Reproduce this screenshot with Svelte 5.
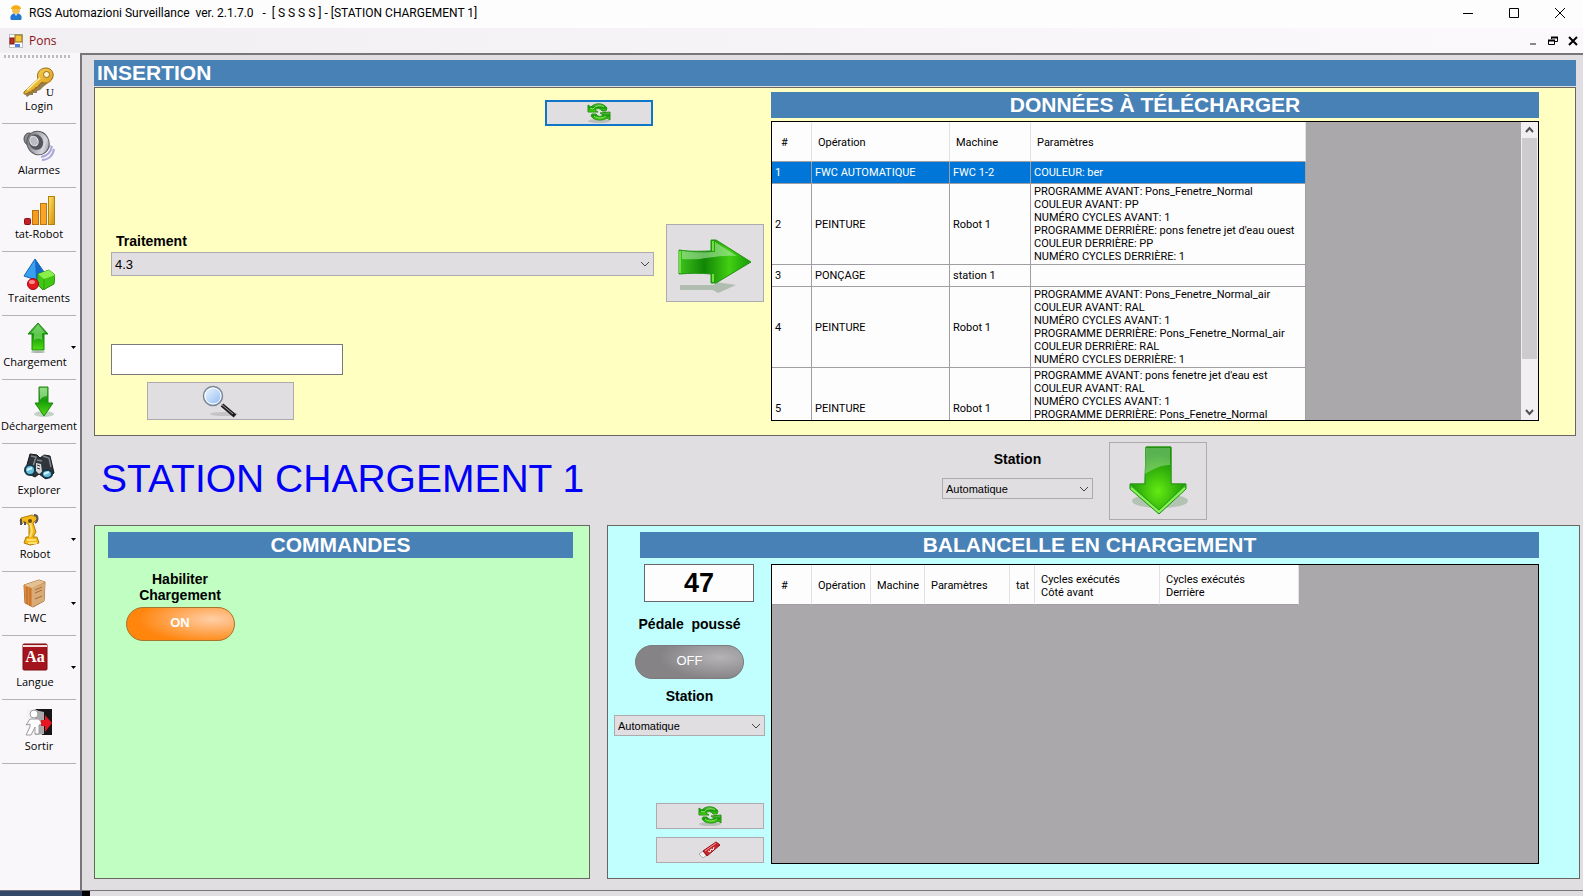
<script lang="ts">
  interface Tool {
    id: string;
    label: string;
    menu?: boolean;
  }

  interface Step {
    id: number;
    operation: string;
    machine: string;
    params: string[];
  }

  const tools: Tool[] = [
    { id: 'login', label: 'Login' },
    { id: 'alarms', label: 'Alarmes' },
    { id: 'stat', label: 'tat-Robot' },
    { id: 'shapes', label: 'Traitements' },
    { id: 'load', label: 'Chargement', menu: true },
    { id: 'unload', label: 'Déchargement' },
    { id: 'explore', label: 'Explorer' },
    { id: 'robot', label: 'Robot', menu: true },
    { id: 'fwc', label: 'FWC', menu: true },
    { id: 'lang', label: 'Langue', menu: true },
    { id: 'exit', label: 'Sortir' }
  ];

  const steps: Step[] = [
    { id: 1, operation: 'FWC AUTOMATIQUE', machine: 'FWC 1-2', params: ['COULEUR: ber'] },
    {
      id: 2,
      operation: 'PEINTURE',
      machine: 'Robot 1',
      params: [
        'PROGRAMME AVANT: Pons_Fenetre_Normal',
        'COULEUR AVANT: PP',
        'NUMÉRO CYCLES AVANT: 1',
        "PROGRAMME DERRIÈRE: pons fenetre jet d'eau ouest",
        'COULEUR DERRIÈRE: PP',
        'NUMÉRO CYCLES DERRIÈRE: 1'
      ]
    },
    { id: 3, operation: 'PONÇAGE', machine: 'station 1', params: [] },
    {
      id: 4,
      operation: 'PEINTURE',
      machine: 'Robot 1',
      params: [
        'PROGRAMME AVANT: Pons_Fenetre_Normal_air',
        'COULEUR AVANT: RAL',
        'NUMÉRO CYCLES AVANT: 1',
        'PROGRAMME DERRIÈRE: Pons_Fenetre_Normal_air',
        'COULEUR DERRIÈRE: RAL',
        'NUMÉRO CYCLES DERRIÈRE: 1'
      ]
    },
    {
      id: 5,
      operation: 'PEINTURE',
      machine: 'Robot 1',
      params: [
        "PROGRAMME AVANT: pons fenetre jet d'eau est",
        'COULEUR AVANT: RAL',
        'NUMÉRO CYCLES AVANT: 1',
        'PROGRAMME DERRIÈRE: Pons_Fenetre_Normal',
        'COULEUR DERRIÈRE: RAL',
        'NUMÉRO CYCLES DERRIÈRE: 1'
      ]
    }
  ];

  let selected = $state(1);
  let enabled = $state(true);
  let pedal = $state(false);
  let search = $state('');
  let treatment = $state('4.3');
  let targetStation = $state('Automatique');
  let loadStation = $state('Automatique');
</script>

{#snippet chevron()}
  <svg class="chevron" width="10" height="6" viewBox="0 0 10 6"><path d="M1 1l4 4 4-4" fill="none" stroke="#444" /></svg>
{/snippet}

{#snippet refreshIcon()}
  <svg width="24" height="20" viewBox="0 0 24 20">
    <ellipse cx="12" cy="18" rx="11" ry="2" fill="#8f9a8f" opacity=".45" />
    <path d="M1 9V2l3 2C7 0 16-1 20 5l-1 3h-4c-2-3-5-3-7-1l3 2z" fill="url(#green)" stroke="#249313" />
    <path d="M23 9v8l-3-2c-4 3-13 3-16-2l1-2h4c2 3 5 3 7 1l-3-2z" fill="url(#green)" stroke="#249313" />
    <path d="M3 5l3 1c3-4 8-4 11-2M7 13c4 3 9 2 12 0" fill="none" stroke="#8be65c" />
  </svg>
{/snippet}

{#snippet toolIcon(id: string)}
  <svg width="32" height="32" viewBox="0 0 32 32">
    {#if id === 'login'}
      <path d="M2 28l14-13 9 2-5 4-3 3-3 1v2H10v2H7l-3 2z" fill="#6b4a08" opacity=".7" />
      <path d="M1 26l14-13C13 7 17 2 23 2c6 0 9 6 6 11-2 4-7 5-10 3l-3 3-1 2-3 1v2H9v2H6l-3 2H1z" fill="url(#gold)" stroke="#9b6a0c" />
      <circle cx="23.500" cy="8.500" r="3" fill="#fff6d0" stroke="#98690f" />
      <path d="M4 24L17 12" stroke="#fff2a0" stroke-width="1.500" />
      <text x="23" y="30" class="key-letter">U</text>
    {:else if id === 'alarms'}
      <path d="M17 24c4-1 8-4 10-9M18 27c6-1 10-5 11-11M19 30c6 0 11-4 12-11" fill="none" stroke="#a9a6d8" stroke-width="2" />
      <ellipse cx="6" cy="9" rx="5" ry="6" fill="#8b8b90" stroke="#4b4b50" />
      <ellipse cx="15" cy="13" rx="11" ry="12" transform="rotate(-25 15 13)" fill="url(#metal)" stroke="#5b5b60" />
      <ellipse cx="13" cy="12" rx="7" ry="8" transform="rotate(-25 13 12)" fill="#55565c" />
      <ellipse cx="11" cy="11" rx="4" ry="5" transform="rotate(-25 11 11)" fill="#b9bac2" stroke="#e7e7ee" />
    {:else if id === 'stat'}
      <rect x="1.500" y="24.500" width="6" height="6" rx="1" fill="#c4202a" stroke="#8c1016" />
      <rect x="9.500" y="16.500" width="6" height="14" fill="#f59c1f" stroke="#b8720e" />
      <rect x="17.500" y="9.500" width="6" height="21" fill="#f9a424" stroke="#b8780e" />
      <rect x="25.500" y="2.500" width="6" height="28" fill="url(#gold)" stroke="#b0820e" />
    {:else if id === 'shapes'}
      <path d="M12 1L1 18l12 4 8-8z" fill="#38a0ef" stroke="#1763b5" />
      <path d="M12 1l1 21 8-8z" fill="#1569c4" />
      <path d="M15 16l11-4 6 5-1 9-11 6-6-6z" fill="#41c713" stroke="#2b920a" />
      <path d="M15 16l11-4 6 5-11 4z" fill="#8bee4b" />
      <path d="M21 21v11" stroke="#2fa00b" />
      <circle cx="10" cy="26" r="5.500" fill="#e31820" stroke="#a00c10" />
      <ellipse cx="9" cy="24" rx="3" ry="2" fill="#ff8888" />
    {:else if id === 'load'}
      <path d="M19 1l10 11h-4v16H13V12H9z" fill="url(#green)" stroke="#1e860e" />
      <path d="M19 3l7 8h-3v7c-3-2-5-1-8 0v-7h-3z" fill="#8ee57b" opacity=".6" />
      <ellipse cx="19" cy="30" rx="7" ry="1" fill="#aab5aa" />
    {:else if id === 'unload'}
      <ellipse cx="21" cy="28" rx="10" ry="3" fill="#9dbb9d" opacity=".6" />
      <path d="M16 1h9v16h5l-9 13-9-13h4z" fill="url(#green)" stroke="#1e860e" />
      <path d="M17 2h7v8c-3 0-5 1-7 4z" fill="#b4efaa" opacity=".6" />
    {:else if id === 'explore'}
      <path d="M7 4l7 1 3 3 4-3 6 1 4 17-8 6-7-5-4 3-10-5z" fill="#30353c" stroke="#15181b" />
      <path d="M13 13l5 1 1 8-3 2-3-3z" fill="#d9dade" />
      <path d="M14 15l3 1M14 18l3 1" stroke="#30353c" />
      <path d="M8 6l5 1-3 9M20 6l6 2 2 9M14 10l5 1" fill="none" stroke="#80868e" stroke-width="1.500" />
      <ellipse cx="7" cy="20" rx="5" ry="5" fill="#65bfdd" stroke="#1b3644" stroke-width="2" />
      <ellipse cx="24" cy="24" rx="5" ry="4" fill="#65bfdd" stroke="#1b3644" stroke-width="2" />
      <path d="M4 20l5-2M21 24l5-2" stroke="#d3f5ff" stroke-width="2" />
    {:else if id === 'robot'}
      <path d="M2 4l11-3 6 3-5 5 3 9-3 5h4l2 6-9 2-6-2 2-6h3V11l-5-4-2 3-2-3z" fill="#f6b818" stroke="#b07c0b" />
      <path d="M15 1c5 0 4 6 1 8M2 5v6M6 8v3" fill="none" stroke="#555" stroke-width="2" />
      <path d="M11 8l2 9-2 6M8 26h9M9 29h9" fill="none" stroke="#ffe16d" stroke-width="2" />
      <circle cx="11" cy="7" r="2" fill="#694d13" />
    {:else if id === 'fwc'}
      <path d="M5 7l15-5 6 2-1 19-11 6-8-4z" fill="#c9894a" stroke="#a56d38" />
      <path d="M5 7l8 3v19l-7-4z" fill="#e08a3a" />
      <path d="M13 10l13-5-1 18-12 6z" fill="#d9ab78" />
      <path d="M5 7l15-5 6 2-13 6z" fill="#e4c193" />
      <path d="M8 9v17M11 10v18M16 12l7-3M16 15l7-3M16 21l7-3" stroke="#a96b35" />
    {:else if id === 'lang'}
      <rect x="4" y="2" width="24" height="26" rx="1" fill="#a3141c" stroke="#7d0d12" />
      <path d="M4 4h24" stroke="#f2dcdc" stroke-width="2" />
      <text x="16" y="20" class="lang-letters">Aa</text>
    {:else if id === 'exit'}
      <rect x="4" y="3" width="25" height="26" fill="#f4f2f5" />
      <path d="M12 3h17v26H19V8z" fill="#161616" />
      <path d="M12 4l9 2v22l-9 1z" fill="#aaa9ac" />
      <circle cx="11" cy="8" r="4" fill="#fff" stroke="#9c9c9f" />
      <path d="M7 13h9l3 5-3 1v9h-4v-7l-4 8H3l4-8v-3l-4 1z" fill="#fff" stroke="#9c9c9f" />
      <path d="M18 14h4v-5l7 8-7 9v-6h-4z" fill="#e61720" />
    {/if}
  </svg>
{/snippet}

<svg class="defs" width="0" height="0" aria-hidden="true">
  <defs>
    <linearGradient id="green" x1="0" y1="0" x2="0" y2="1">
      <stop offset="0" stop-color="#6cbf5c" />
      <stop offset=".45" stop-color="#149a08" />
      <stop offset="1" stop-color="#51dc14" />
    </linearGradient>
    <linearGradient id="gold" x1="0" y1="0" x2="1" y2="1">
      <stop offset="0" stop-color="#ffe36a" />
      <stop offset="1" stop-color="#d38d0a" />
    </linearGradient>
    <linearGradient id="metal" x1="0" y1="0" x2="1" y2="1">
      <stop offset="0" stop-color="#606168" />
      <stop offset=".7" stop-color="#d7d7dd" />
      <stop offset="1" stop-color="#77787e" />
    </linearGradient>
    <linearGradient id="lens" x1="0" y1="0" x2="1" y2="1">
      <stop offset="0" stop-color="#f4faff" />
      <stop offset="1" stop-color="#89b8f2" />
    </linearGradient>
    <radialGradient id="glow" cx=".5" cy=".7" r=".6">
      <stop offset="0" stop-color="#63ea12" />
      <stop offset="1" stop-color="#108a06" />
    </radialGradient>
    <linearGradient id="body-right" x1="0" y1="0" x2="1" y2="0">
      <stop offset="0" stop-color="#3fc41c" />
      <stop offset=".35" stop-color="#118505" />
      <stop offset=".7" stop-color="#43cf12" />
      <stop offset="1" stop-color="#159a0b" />
    </linearGradient>
  </defs>
</svg>

<div class="window">
  <header class="titlebar">
    <svg width="14" height="16" viewBox="0 0 14 16">
      <path d="M2 15c-2-4 1-7 5-7s7 3 5 7z" fill="#2477d0" />
      <path d="M5 8l2 3 2-3z" fill="#cce6ff" />
      <circle cx="7" cy="5" r="4" fill="#f1bd55" />
      <path d="M2 4c0-5 10-5 10 0z" fill="#f7ae13" />
    </svg>
    <span class="title">RGS Automazioni Surveillance  ver. 2.1.7.0   -  [ S S S S ] - [STATION CHARGEMENT 1]</span>
    <div class="window-buttons">
      <button aria-label="Réduire"><svg width="12" height="12" viewBox="0 0 12 12"><path d="M1 6.500h10" /></svg></button>
      <button aria-label="Agrandir"><svg width="12" height="12" viewBox="0 0 12 12"><path d="M1.500 1.500h9v9h-9z" /></svg></button>
      <button aria-label="Fermer"><svg width="12" height="12" viewBox="0 0 12 12"><path d="M1 1l10 10M11 1L1 11" /></svg></button>
    </div>
  </header>

  <nav class="menubar">
    <svg width="14" height="14" viewBox="0 0 14 14">
      <rect x=".500" y=".500" width="13" height="13" fill="#fff" stroke="#b9bcc2" />
      <rect x="6" y="1" width="7" height="7" fill="#f3c63c" stroke="#8b6d17" />
      <rect x="1" y="4" width="4" height="6" fill="#c22d24" stroke="#7c1813" />
      <rect x="6" y="10" width="5" height="3" fill="#4e7fe0" />
    </svg>
    <button class="menu-item">Pons</button>
    <div class="child-buttons">
      <button aria-label="Réduire la fenêtre"><svg width="10" height="10" viewBox="0 0 10 10"><path d="M2 8h6" stroke="#888" stroke-width="2" /></svg></button>
      <button aria-label="Restaurer la fenêtre">
        <svg width="10" height="10" viewBox="0 0 10 10">
          <path d="M3.500 3V1.500h6v4H7M.500 4.500h6v4h-6z" fill="none" stroke="#000" />
          <path d="M3 1.500h7M0 4.500h7" stroke="#000" stroke-width="2" />
        </svg>
      </button>
      <button aria-label="Fermer la fenêtre"><svg width="10" height="10" viewBox="0 0 10 10"><path d="M1 1l8 8M9 1L1 9" stroke="#000" stroke-width="2" /></svg></button>
    </div>
  </nav>

  <div class="body">
    <aside class="toolbar">
      <div class="grip"></div>
      {#each tools as tool (tool.id)}
        <button class="tool" class:has-menu={tool.menu}>
          <span class="tool-face">
            {@render toolIcon(tool.id)}
            <span class="tool-label">{tool.label}</span>
          </span>
          {#if tool.menu}
            <svg class="caret" width="5" height="3" viewBox="0 0 5 3"><path d="M0 0h5L2.500 3z" /></svg>
          {/if}
        </button>
      {/each}
    </aside>

    <main>
      <h2 class="bar bar-left">INSERTION</h2>
      <section class="panel insertion">
        <div class="fields">
          <button class="btn small focused" aria-label="Actualiser">{@render refreshIcon()}</button>
          <label class="label treatment-label" for="treatment">Traitement</label>
          <div class="select large">
            <select id="treatment" bind:value={treatment}>
              <option>4.3</option>
            </select>
            {@render chevron()}
          </div>
          <input class="search" type="text" aria-label="Recherche" bind:value={search} />
          <button class="btn find" aria-label="Rechercher">
            <svg width="38" height="34" viewBox="0 0 38 34">
              <ellipse cx="22" cy="30" rx="14" ry="2" fill="#aaa" opacity=".5" />
              <path d="M20 21L33 32" stroke="#1c1c1e" stroke-width="4" />
              <path d="M19 20l12 10" stroke="#a9a9ad" />
              <circle cx="11" cy="12" r="9.500" fill="url(#lens)" stroke="#7c8796" stroke-width="1.500" />
              <circle cx="11" cy="12" r="8" fill="none" stroke="#fff" />
            </svg>
          </button>
        </div>

        <button class="btn big send" aria-label="Envoyer">
          <svg width="76" height="64" viewBox="0 0 76 64">
            <path d="M3 54h34l2-3 20 3-18 8-5-3H3z" fill="#7f9c7f" opacity=".5" />
            <path d="M2 19c12 2 24 1 32 1V9h5l35 22-35 21h-5V43c-10-1-20-1-32 0z" fill="url(#body-right)" stroke="#1f9310" />
            <path d="M5 20c12 2 24 1 33 1V11l22 14c-20-2-35 5-55 3z" fill="#b8efae" opacity=".55" />
            <path d="M3 20v22M36 10v10M36 43v8" stroke="#6fe13c" stroke-width="2" />
          </svg>
        </button>

        <div class="download">
          <h2 class="bar">DONNÉES À TÉLÉCHARGER</h2>
          <div class="grid-view">
            <div class="grid-rows">
              <table>
                <colgroup>
                  <col class="w-id" />
                  <col class="w-operation" />
                  <col class="w-machine" />
                  <col class="w-params" />
                </colgroup>
                <thead>
                  <tr><th>#</th><th>Opération</th><th>Machine</th><th>Paramètres</th></tr>
                </thead>
                <tbody>
                  {#each steps as step (step.id)}
                    <tr class:selected={selected === step.id} onclick={() => (selected = step.id)}>
                      <td>{step.id}</td>
                      <td>{step.operation}</td>
                      <td>{step.machine}</td>
                      <td>
                        {#each step.params as line}
                          <div>{line}</div>
                        {/each}
                      </td>
                    </tr>
                  {/each}
                </tbody>
              </table>
            </div>
            <div class="scrollbar">
              <svg width="9" height="16" viewBox="0 0 9 16"><path d="M1 10l3.500-4L8 10" /></svg>
              <div class="track"><div class="thumb"></div></div>
              <svg width="9" height="16" viewBox="0 0 9 16"><path d="M1 6l3.500 4L8 6" /></svg>
            </div>
          </div>
        </div>
      </section>

      <div class="middle">
        <h1>STATION CHARGEMENT 1</h1>
        <div class="target">
          <label class="label" for="target-station">Station</label>
          <div class="select">
            <select id="target-station" bind:value={targetStation}>
              <option>Automatique</option>
            </select>
            {@render chevron()}
          </div>
        </div>
        <button class="btn big" aria-label="Charger">
          <svg width="64" height="76" viewBox="0 0 64 76">
            <ellipse cx="34" cy="58" rx="28" ry="7" fill="#6f9a6f" opacity=".4" />
            <path d="M20 4h25v37h15v5L33 71 4 46v-5h15z" fill="#3cc619" stroke="#208a10" />
            <path d="M20 4h25v37h15L33 67 4 41h15z" fill="url(#glow)" stroke="#2e9a1a" />
            <path d="M20 5h24v17c-9 0-17 4-25 9z" fill="#c5eebd" opacity=".4" />
            <path d="M5 45l28 24 26-24" fill="none" stroke="#8cf25e" stroke-width="2" />
          </svg>
        </button>
      </div>

      <div class="bottom">
        <section class="panel commands">
          <h2 class="bar">COMMANDES</h2>
          <div class="command">
            <span class="label" id="enable-label">Habiliter<br />Chargement</span>
            <button class="pill" class:on={enabled} aria-labelledby="enable-label" onclick={() => (enabled = !enabled)}>
              {enabled ? 'ON' : 'OFF'}
            </button>
          </div>
        </section>

        <section class="panel carrier">
          <h2 class="bar">BALANCELLE EN CHARGEMENT</h2>
          <div class="carrier-body">
            <div class="carrier-side">
              <output class="counter">47</output>
              <span class="label pedal-label" id="pedal-label">Pédale  poussé</span>
              <button class="pill" class:on={pedal} aria-labelledby="pedal-label" onclick={() => (pedal = !pedal)}>
                {pedal ? 'ON' : 'OFF'}
              </button>
              <label class="label station-label" for="load-station">Station</label>
              <div class="select">
                <select id="load-station" bind:value={loadStation}>
                  <option>Automatique</option>
                </select>
                {@render chevron()}
              </div>
              <div class="actions">
                <button class="btn small" aria-label="Actualiser">{@render refreshIcon()}</button>
                <button class="btn small" aria-label="Effacer">
                  <svg width="24" height="18" viewBox="0 0 24 18">
                    <path d="M1 13l4-3 4 4-4 3z" fill="#f5f1f3" stroke="#aaa" />
                    <path d="M5 10L18 1l4 3-13 11z" fill="#c8252c" stroke="#8d1218" />
                    <path d="M7 10l11-8" stroke="#ff9a9a" />
                    <path d="M10 10l2 1 1-3 2 1 1-3" fill="none" stroke="#fff" />
                  </svg>
                </button>
              </div>
            </div>
            <div class="grid-view">
              <div class="grid-rows">
                <table>
                  <colgroup>
                    <col class="w-id" />
                    <col class="c-operation" />
                    <col class="c-machine" />
                    <col class="c-params" />
                    <col class="c-state" />
                    <col class="c-front" />
                    <col class="c-back" />
                  </colgroup>
                  <thead>
                    <tr>
                      <th>#</th>
                      <th>Opération</th>
                      <th>Machine</th>
                      <th>Paramètres</th>
                      <th>tat</th>
                      <th>Cycles exécutés<br />Côté avant</th>
                      <th>Cycles exécutés<br />Derrière</th>
                    </tr>
                  </thead>
                </table>
              </div>
            </div>
          </div>
        </section>
      </div>
    </main>
  </div>

  <footer class="taskbar"><div class="task"></div><div class="task-gap"></div></footer>
</div>

<style>
  :global(body) {
    margin: 0;
    overflow: hidden;
  }

  .window,
  .window * {
    box-sizing: border-box;
  }

  .window {
    display: flex;
    flex-direction: column;
    min-height: 100vh;
    background: #e1dee1;
    color: #000;
    font-family: 'Liberation Sans', Arial, sans-serif;
    font-size: 11px;
  }

  .defs {
    position: absolute;
  }

  button,
  select,
  input {
    margin: 0;
    padding: 0;
    font: inherit;
    color: inherit;
  }

  h1,
  h2 {
    margin: 0;
  }

  .titlebar {
    display: flex;
    align-items: center;
    height: 28px;
    padding: 0 0 2px 9px;
    background: #fefdfe;
    font-family: Roboto, 'Noto Sans', sans-serif;
    font-size: 12px;
  }

  .title {
    flex: 1;
    margin-left: 6px;
    white-space: pre;
  }

  .window-buttons,
  .child-buttons {
    display: flex;
  }

  .window-buttons button,
  .child-buttons button,
  .menu-item {
    display: flex;
    align-items: center;
    justify-content: center;
    border: 0;
    background: none;
  }

  .window-buttons button {
    width: 46px;
    height: 26px;
  }

  .window-buttons path {
    fill: none;
    stroke: #000;
  }

  .menubar {
    display: flex;
    align-items: center;
    height: 25px;
    padding-left: 9px;
    background: linear-gradient(90deg, #f1eff1, #fbf9fb);
    font-family: 'Open Sans', 'Noto Sans', sans-serif;
    font-size: 12px;
  }

  .menu-item {
    margin: 0 auto 0 6px;
    color: #8b1018;
  }

  .child-buttons button {
    width: 20px;
    height: 20px;
  }

  .body {
    display: flex;
    flex: 1;
  }

  .toolbar {
    width: 80px;
    background: #f9f7fa;
    font-family: 'Open Sans', 'Noto Sans', sans-serif;
    font-size: 11px;
  }

  .grip {
    height: 3px;
    margin: 2px 8px 2px 4px;
    background: repeating-linear-gradient(90deg, #bdbbbe 0 2px, transparent 2px 4px);
  }

  .tool {
    display: flex;
    align-items: center;
    justify-content: center;
    width: 74px;
    height: 64px;
    margin-left: 2px;
    border: 0;
    border-bottom: 1px solid #b4b2b5;
    background: none;
  }

  .tool-face {
    display: flex;
    flex-direction: column;
    align-items: center;
    flex: 1;
    min-width: 0;
    padding-bottom: 4px;
  }

  .has-menu .tool-face {
    flex: 0 0 66px;
  }

  .tool-label {
    line-height: 16px;
    white-space: nowrap;
  }

  .tool-face svg {
    margin-top: 1px;
  }

  .caret {
    margin-left: 3px;
  }

  .key-letter {
    font: 11px 'Liberation Serif', serif;
  }

  .lang-letters {
    font: bold 16px 'Liberation Serif', serif;
    text-anchor: middle;
    fill: #fff;
  }

  main {
    display: flex;
    flex: 1;
    flex-direction: column;
    min-width: 0;
    padding: 5px 3px 11px 12px;
    border-top: 2px solid #78767a;
    border-left: 2px solid #78767a;
  }

  .bar {
    height: 26px;
    background: #4881b5;
    color: #fff;
    font-size: 21px;
    line-height: 26px;
    text-align: center;
  }

  .bar-left {
    margin-right: 4px;
    padding-left: 3px;
    text-align: left;
  }

  .panel {
    border: 1px solid #68665f;
  }

  .insertion {
    display: flex;
    margin: 1px 4px 0 0;
    padding: 0 36px 14px 16px;
    background: #ffffc1;
  }

  .fields {
    display: flex;
    flex-direction: column;
    width: 543px;
    padding-top: 12px;
  }

  .label {
    font-size: 14px;
    font-weight: bold;
    line-height: 16px;
    text-align: center;
    white-space: pre-wrap;
  }

  .btn {
    display: flex;
    align-items: center;
    justify-content: center;
    border: 1px solid #adabad;
    background: #e1dee1;
  }

  .small {
    width: 108px;
    height: 26px;
  }

  .focused {
    align-self: flex-end;
    margin-right: 1px;
    border: 2px solid #1076c8;
  }

  .big {
    width: 98px;
    height: 78px;
  }

  .treatment-label {
    align-self: flex-start;
    margin: 107px 0 3px 5px;
  }

  .select {
    position: relative;
    width: 151px;
    height: 21px;
  }

  .select select {
    width: 100%;
    height: 100%;
    padding-left: 3px;
    border: 1px solid #adabad;
    border-radius: 0;
    background: #e1dee1;
    appearance: none;
  }

  .select.large {
    width: 100%;
    height: 24px;
    font-size: 13px;
  }

  .chevron {
    position: absolute;
    top: 50%;
    right: 4px;
    margin-top: -3px;
    pointer-events: none;
  }

  .search {
    width: 232px;
    height: 31px;
    margin-top: 68px;
    padding: 0 4px;
    border: 1px solid #7b797b;
    background: #fff;
    font-size: 14px;
  }

  .find {
    width: 147px;
    height: 38px;
    margin: 7px 0 0 36px;
  }

  .send {
    margin: 136px 7px 0 12px;
  }

  .download {
    flex: 1;
    min-width: 0;
    padding-top: 4px;
  }

  .grid-view {
    display: flex;
    flex: 1;
    height: 300px;
    border: 1px solid #000;
    background: #aaa8aa;
  }

  .download .grid-view {
    margin-top: 3px;
  }

  .grid-rows {
    flex: 1;
    min-width: 0;
    overflow: hidden;
  }

  table {
    width: 0;
    border-collapse: separate;
    border-spacing: 0;
    table-layout: fixed;
    font-family: Roboto, Arial, sans-serif;
    line-height: 13px;
  }

  .w-id {
    width: 40px;
  }

  .w-operation {
    width: 138px;
  }

  .w-machine {
    width: 81px;
  }

  .w-params {
    width: 275px;
  }

  .c-operation {
    width: 59px;
  }

  .c-machine {
    width: 54px;
  }

  .c-params {
    width: 85px;
  }

  .c-state {
    width: 25px;
  }

  .c-front {
    width: 125px;
  }

  .c-back {
    width: 139px;
  }

  th {
    height: 40px;
    padding: 2px 0 0 6px;
    border-right: 1px solid #e3e1e4;
    border-bottom: 1px solid #a09ea1;
    background: #fefdfe;
    font-weight: normal;
    text-align: left;
    white-space: nowrap;
  }

  th:first-child {
    padding-left: 9px;
  }

  td {
    height: 22px;
    padding: 1px 0 1px 3px;
    border-right: 1px solid #a09ea1;
    border-bottom: 1px solid #a09ea1;
    background: #fefdfe;
    white-space: nowrap;
  }

  .selected td {
    background: #0077d8;
    color: #fff;
  }

  .scrollbar {
    display: flex;
    flex-direction: column;
    align-items: center;
    width: 17px;
    background: #f1eff1;
  }

  .scrollbar path {
    fill: none;
    stroke: #505050;
    stroke-width: 2;
  }

  .track {
    flex: 1;
    width: 15px;
  }

  .thumb {
    height: 83%;
    background: #cdcbcd;
  }

  .middle {
    display: flex;
    align-items: center;
    height: 89px;
    padding-top: 1px;
  }

  h1 {
    flex: 0 0 848px;
    padding: 0 0 5px 7px;
    color: #0000f8;
    font-size: 39px;
    font-weight: normal;
    line-height: 44px;
  }

  .target {
    display: flex;
    flex-direction: column;
    gap: 11px;
    margin-right: 16px;
    padding-bottom: 12px;
  }

  .bottom {
    display: flex;
    flex: 1;
    gap: 17px;
  }

  .commands {
    width: 496px;
    padding: 6px 16px 0 13px;
    background: #c1fec1;
  }

  .command {
    display: flex;
    flex-direction: column;
    align-items: center;
    width: 110px;
    margin: 13px 0 0 17px;
  }

  .pill {
    width: 109px;
    height: 34px;
    padding-bottom: 3px;
    border: 1px solid #7d7b7e;
    border-radius: 17px;
    background: radial-gradient(ellipse 60px 22px at 78% 35%, #b5b3b6, transparent), #858386;
    color: #fff;
    font-size: 13px;
  }

  .command .pill {
    margin-top: 4px;
  }

  .pill.on {
    border-color: #a6762f;
    background: radial-gradient(ellipse 75px 24px at 80% 35%, #ffcfa8, transparent), #ff850d;
    font-weight: bold;
  }

  .carrier {
    flex: 1;
    min-width: 0;
    padding: 6px 40px 14px 6px;
    background: #c1fefe;
  }

  .carrier .bar {
    margin-left: 26px;
  }

  .carrier-body {
    display: flex;
    gap: 6px;
    margin-top: 6px;
  }

  .carrier-side {
    display: flex;
    flex-direction: column;
    align-items: center;
    width: 151px;
  }

  .counter {
    align-self: flex-end;
    width: 110px;
    height: 38px;
    margin-right: 11px;
    border: 1px solid #68666a;
    background: #fefdfe;
    font-size: 27px;
    font-weight: bold;
    line-height: 36px;
    text-align: center;
  }

  .pedal-label {
    margin: 14px 0 13px;
  }

  .station-label {
    margin: 9px 0 11px;
  }

  .actions {
    display: flex;
    flex-direction: column;
    align-self: flex-end;
    gap: 8px;
    margin: auto 1px 1px 0;
  }

  .taskbar {
    display: flex;
    height: 7px;
    border-top: 1px solid #77757a;
    background: #e1dee1;
  }

  .task {
    width: 82px;
    background: #34486a;
  }

  .task-gap {
    width: 8px;
    background: #000;
  }
</style>
